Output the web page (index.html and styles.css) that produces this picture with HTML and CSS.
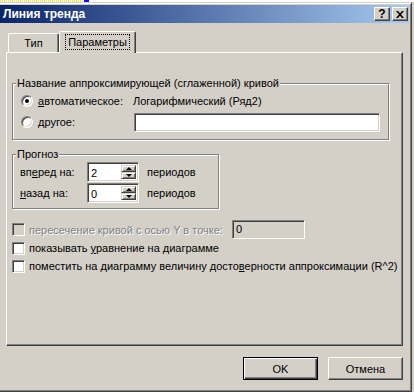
FILE: index.html
```html
<!DOCTYPE html>
<html lang="ru">
<head>
    <meta charset="UTF-8"/>
    <title>Линия тренда</title>
    <link rel="stylesheet" href="styles.css">
</head>
<body>

<div class="strip"><span class="strip-dots"></span><span class="strip-blue"></span></div>

<div class="dialog">
    <div class="titlebar">
        <span class="title">Линия тренда</span>
        <span class="caption-btn help">?</span>
        <span class="caption-btn close">
            <svg width="8" height="7" viewBox="0 0 8 7"><path d="M0 0h2l2 2.3 2-2.3h2l-3 3.5 3 3.5h-2l-2-2.3-2 2.3h-2l3-3.5z" fill="#000"/></svg>
        </span>
    </div>

    <div class="content">
        <div class="tabs">
            <div class="tab tab-type">Тип</div>
            <div class="tab tab-active"><span class="focus">Параметры</span></div>
        </div>

        <div class="panel">
            <fieldset class="group group-name">
                <legend>Название аппроксимирующей (сглаженной) кривой</legend>
                <div class="row row-auto">
                    <span class="radio checked"></span>
                    <span class="radio-label"><u>а</u>втоматическое:</span>
                    <span class="auto-name">Логарифмический (Ряд2)</span>
                </div>
                <div class="row row-other">
                    <span class="radio"></span>
                    <span class="radio-label"><u>д</u>ругое:</span>
                    <span class="field field-name"></span>
                </div>
            </fieldset>

            <fieldset class="group group-forecast">
                <legend>Прогноз</legend>
                <div class="row spin-row">
                    <span class="spin-label">вп<u>е</u>ред на:</span>
                    <span class="field spin"><span class="spin-value">2</span><span class="spin-btns"><span class="spin-btn"><i class="arrow-up"></i></span><span class="spin-btn"><i class="arrow-down"></i></span></span></span>
                    <span class="unit">периодов</span>
                </div>
                <div class="row spin-row">
                    <span class="spin-label"><u>н</u>азад на:</span>
                    <span class="field spin"><span class="spin-value">0</span><span class="spin-btns"><span class="spin-btn"><i class="arrow-up"></i></span><span class="spin-btn"><i class="arrow-down"></i></span></span></span>
                    <span class="unit">периодов</span>
                </div>
            </fieldset>

            <div class="checks">
                <div class="check-row check-first">
                    <span class="checkbox disabled"></span>
                    <span class="check-label disabled-text">пересечение кривой с осью Y в точке:</span>
                    <span class="field field-disabled">0</span>
                </div>
                <div class="check-row">
                    <span class="checkbox"></span>
                    <span class="check-label">показывать <u>у</u>равнение на диаграмме</span>
                </div>
                <div class="check-row">
                    <span class="checkbox"></span>
                    <span class="check-label">поместить на диаграмму величину досто<u>в</u>ерности аппроксимации (R^2)</span>
                </div>
            </div>
        </div>

        <div class="buttons">
            <button class="btn btn-default">OK</button>
            <button class="btn">Отмена</button>
        </div>
    </div>
</div>

</body>
</html>
```

FILE: styles.css
```css
* {
  box-sizing: border-box;
}
body {
  margin: 0;
  background: #d4d0c8;
  font-family: "Liberation Sans", Arial, sans-serif;
  font-size: 11px;
  color: #000;
  white-space: nowrap;
  overflow: hidden;
}
u {
  text-decoration: underline;
  text-underline-offset: 1px;
}

/* sliver of the sheet behind the dialog */
.strip {
  height: 2px;
  background: #fff;
  display: flex;
}
.strip-dots {
  width: 84px;
  background: repeating-linear-gradient(90deg, #f2e65a 0 1px, #fff 1px 2px);
}
.strip-blue {
  width: 5px;
  background: #1010f0;
}

.dialog {
  width: 415px;
  height: 390px;
  margin-left: -3px;
  padding: 2px;
  background: #d4d0c8;
  border: 1px solid;
  border-color: #d4d0c8 #404040 #404040 #d4d0c8;
  box-shadow: inset 1px 1px #fff, inset -1px -1px #808080;
}

.titlebar {
  height: 18px;
  display: flex;
  align-items: center;
  padding: 0 1px 0 3px;
  background: linear-gradient(90deg, #0a246a, #a6caf0);
}
.title {
  flex: 1;
  color: #fff;
  font-weight: bold;
  font-size: 12px;
}
.caption-btn {
  width: 16px;
  height: 14px;
  display: flex;
  align-items: center;
  justify-content: center;
  background: #d4d0c8;
  border: 1px solid;
  border-color: #fff #404040 #404040 #fff;
  box-shadow: inset -1px -1px #808080;
  font-weight: bold;
  font-size: 12px;
  line-height: 1;
}
.caption-btn.close {
  margin-left: 2px;
}

.content {
  padding: 8px 6px 0 6px;
}

.tabs {
  height: 21px;
  display: flex;
  align-items: flex-end;
  padding-left: 2px;
}
.tab {
  height: 19px;
  display: flex;
  align-items: center;
  justify-content: center;
  border-top: 1px solid #fff;
  border-left: 1px solid #fff;
  border-right: 1px solid #404040;
  border-radius: 2px 2px 0 0;
  box-shadow: inset -1px 0 #808080;
}
.tab-type {
  width: 51px;
}
.tab-active {
  width: 77px;
  height: 22px;
  margin-bottom: -1px;
  position: relative;
  z-index: 1;
  background: #d4d0c8;
  padding-bottom: 2px;
}
.focus {
  border: 1px dotted #000;
  padding: 1px 2px;
}

.panel {
  height: 294px;
  padding: 0 5px;
  border: 1px solid;
  border-color: #fff #404040 #404040 #fff;
  box-shadow: inset -1px -1px #808080;
}

.group {
  margin: 0;
  padding: 0 0 6px 0;
  min-width: 0;
  border: 1px solid #808080;
  box-shadow: 1px 1px #fff, inset 1px 1px #fff;
}
.group legend {
  margin-left: 3px;
  padding: 0 1px;
  line-height: 14px;
  background: #d4d0c8;
}
.group-name {
  width: 377px;
  margin-top: 23px;
}
.group-forecast {
  width: 207px;
  margin-top: 7px;
  padding-bottom: 5px;
}

.row {
  display: flex;
  align-items: center;
  padding-left: 8px;
}
.row > * {
  flex-shrink: 0;
}
.row-auto {
  height: 21px;
}
.row-other {
  height: 22px;
}

.radio {
  width: 12px;
  height: 12px;
  border-radius: 50%;
  background: #fff;
  border: 1px solid;
  border-color: #808080 #fff #fff #808080;
  box-shadow: inset 1px 1px #404040, inset -1px -1px #d4d0c8;
  display: flex;
  align-items: center;
  justify-content: center;
}
.radio.checked::after {
  content: "";
  width: 4px;
  height: 4px;
  border-radius: 50%;
  background: #000;
}
.radio-label {
  width: 95px;
  margin-left: 5px;
}
.field {
  height: 19px;
  background: #fff;
  border: 1px solid;
  border-color: #808080 #fff #fff #808080;
  box-shadow: inset 1px 1px #404040, inset -1px -1px #d4d0c8;
}
.field-name {
  width: 246px;
  margin-left: 1px;
}

.spin-row {
  height: 20px;
  padding-left: 7px;
  margin-top: 1px;
}
.spin-label {
  width: 67px;
}
.spin {
  width: 52px;
  height: 20px;
  display: flex;
  padding: 2px;
}
.spin-value {
  flex: 1;
  padding-left: 1px;
  line-height: 16px;
}
.spin-btns {
  width: 15px;
  display: flex;
  flex-direction: column;
}
.spin-btn {
  height: 8px;
  display: flex;
  align-items: center;
  justify-content: center;
  background: #d4d0c8;
  border: 1px solid;
  border-color: #d4d0c8 #404040 #404040 #d4d0c8;
  box-shadow: inset 1px 1px #fff, inset -1px -1px #808080;
}
.arrow-up,
.arrow-down {
  width: 0;
  height: 0;
  border-left: 3px solid transparent;
  border-right: 3px solid transparent;
}
.arrow-up {
  border-bottom: 3px solid #000;
}
.arrow-down {
  border-top: 3px solid #000;
}
.unit {
  margin-left: 8px;
}

.checks {
  margin-top: 11px;
}
.check-row {
  height: 18px;
  display: flex;
  align-items: center;
}
.check-row > * {
  flex-shrink: 0;
}
.check-first {
  height: 19px;
}
.checkbox {
  width: 13px;
  height: 13px;
  background: #fff;
  border: 1px solid;
  border-color: #808080 #fff #fff #808080;
  box-shadow: inset 1px 1px #404040, inset -1px -1px #d4d0c8;
}
.checkbox.disabled {
  background: #d4d0c8;
}
.check-label {
  margin-left: 4px;
}
.check-first .check-label {
  width: 203px;
}
.disabled-text {
  color: #808080;
  text-shadow: 1px 1px #fff;
}
.field-disabled {
  width: 73px;
  background: #d4d0c8;
  padding-left: 3px;
  line-height: 17px;
}

.buttons {
  display: flex;
  justify-content: flex-end;
  gap: 10px;
  margin-top: 11px;
}
.btn {
  width: 75px;
  height: 23px;
  padding: 0;
  font-family: inherit;
  font-size: 11px;
  color: #000;
  background: #d4d0c8;
  border: 1px solid;
  border-color: #fff #404040 #404040 #fff;
  box-shadow: inset -1px -1px #808080;
}
.btn-default {
  border-color: #000;
  box-shadow: inset 1px 1px #fff, inset -1px -1px #404040, inset -2px -2px #808080;
}
```
